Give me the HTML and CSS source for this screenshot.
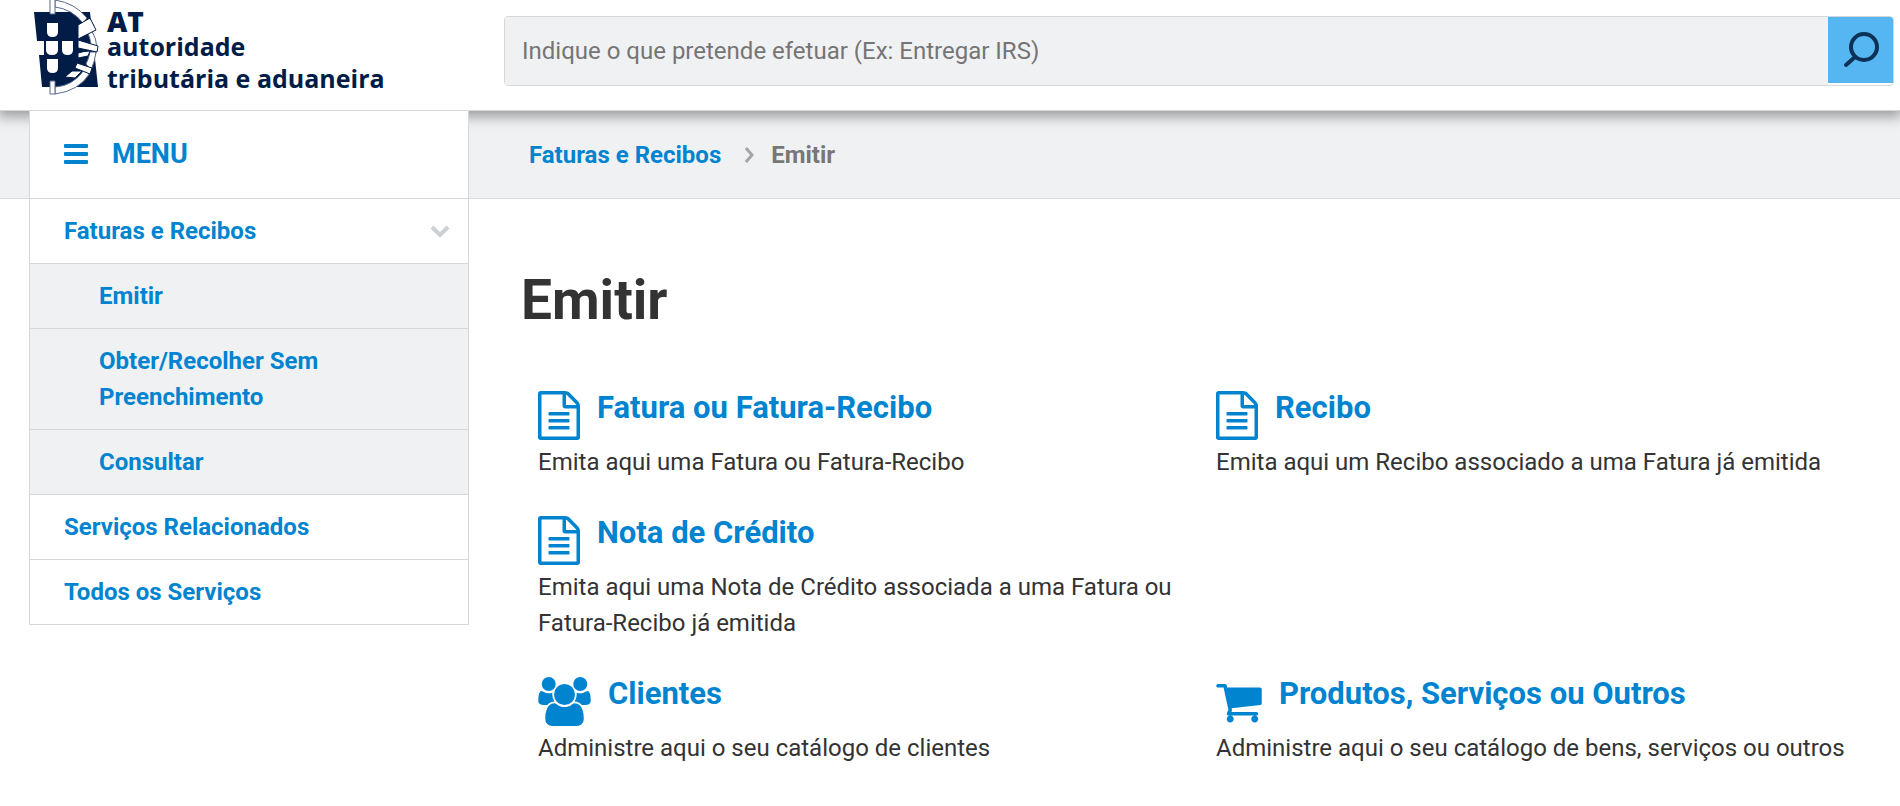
FILE: index.html
```html
<!DOCTYPE html>
<html lang="pt">
<head>
<meta charset="UTF-8">
<meta name="viewport" content="width=device-width, initial-scale=1.0">
<title>Emitir - Faturas e Recibos</title>
<link rel="stylesheet" href="styles.css">
</head>
<body>

<!-- Icons used more than once -->
<svg class="sprite" aria-hidden="true">
  <symbol id="icon-file" viewBox="0 0 1536 1792">
    <path d="M1468 380q28 28 48 76t20 88v1152q0 40-28 68t-68 28h-1344q-40 0-68-28t-28-68v-1600q0-40 28-68t68-28h896q40 0 88 20t76 48zm-444-244v376h376q-10-29-22-41l-313-313q-12-12-41-22zm384 1528v-1024h-416q-40 0-68-28t-28-68v-416h-768v1536h1280zm-1024-864q0-14 9-23t23-9h704q14 0 23 9t9 23v64q0 14-9 23t-23 9h-704q-14 0-23-9t-9-23v-64zm736 224q14 0 23 9t9 23v64q0 14-9 23t-23 9h-704q-14 0-23-9t-9-23v-64q0-14 9-23t23-9h704zm0 256q14 0 23 9t9 23v64q0 14-9 23t-23 9h-704q-14 0-23-9t-9-23v-64q0-14 9-23t23-9h704z"/>
  </symbol>
</svg>

<header class="header">
  <a class="logo" href="#">
    <svg class="logo-shield" viewBox="0 0 66 95" aria-hidden="true">
      <path fill="#001c47" d="M1 12H57L65 87H9L6 55H11V41H4Z"/>
      <g fill="#fff">
        <path d="M14 23h11v9q0 5-5.500 5t-5.500-5zM13 41h12v9q0 5-6 5t-6-5zM29 41h11v9q0 5-5.500 5t-5.500-5zM14 59h11v9q0 5-5.500 5t-5.500-5z"/>
      </g>
      <g fill="#fff" stroke="#5b6b8b">
        <path d="M22 0Q42 3 54 18L50 23Q39 9 22 7Z"/>
        <path d="M58 29Q64 39 64 49L58 49Q58 38 54 32Z"/>
        <path d="M63 52Q62 61 58 70L53 64Q56 58 57 52Z"/>
        <path d="M22 94Q46 91 57 73L51 70Q40 86 22 87Z"/>
        <path d="M17 -1h5v15h-5zM17 81h5v13h-5z"/>
      </g>
      <path fill="#fff" stroke="#001c47" d="M45 25L57 18L63 30L45 39ZM45 40L65 46L64 52L45 48ZM45 53Q51 51 57 51L55 56L45 58ZM44 63L59 68L57 74L42 68ZM39 71L49 71L42 78L32 77Z"/>
    </svg>
    <span class="logo-text">
      <span class="logo-at">AT</span>
      <span class="logo-name">autoridade<br>tributária e aduaneira</span>
    </span>
  </a>
  <form class="search">
    <input type="search" class="search-input" aria-label="Pesquisar" placeholder="Indique o que pretende efetuar (Ex: Entregar IRS)">
    <button type="submit" class="search-button" aria-label="Pesquisar">
      <svg width="36" height="36" viewBox="0 0 36 36" fill="none" stroke="#0c3257" stroke-width="4" stroke-linecap="round" aria-hidden="true">
        <circle cx="21" cy="15" r="13"/>
        <path d="M12 25L3 33"/>
      </svg>
    </button>
  </form>
</header>

<div class="layout">
  <nav class="breadcrumb" aria-label="Localização">
    <a href="#">Faturas e Recibos</a>
    <svg width="9" height="16" viewBox="0 0 9 16" fill="none" stroke="#a5a5a5" stroke-width="3" aria-hidden="true">
      <path d="M1 1L7 8L1 15"/>
    </svg>
    <span>Emitir</span>
  </nav>

  <nav class="sidebar" aria-label="Menu">
    <button type="button" class="menu-toggle">
      <svg width="24" height="20" viewBox="0 0 24 20" fill="#0084d0" aria-hidden="true">
        <rect width="24" height="4" rx="1"/>
        <rect y="8" width="24" height="4" rx="1"/>
        <rect y="16" width="24" height="4" rx="1"/>
      </svg>
      MENU
    </button>
    <ul class="menu">
      <li>
        <a href="#">Faturas e Recibos
          <svg width="20" height="13" viewBox="0 0 20 13" fill="none" stroke="#ccd0d3" stroke-width="4" aria-hidden="true">
            <path d="M2 2L10 10L18 2"/>
          </svg>
        </a>
        <ul class="submenu">
          <li><a href="#">Emitir</a></li>
          <li><a href="#">Obter/Recolher Sem Preenchimento</a></li>
          <li><a href="#">Consultar</a></li>
        </ul>
      </li>
      <li><a href="#">Serviços Relacionados</a></li>
      <li><a href="#">Todos os Serviços</a></li>
    </ul>
  </nav>

  <main class="content">
    <h1>Emitir</h1>
    <div class="services">
      <section class="service">
        <h2><a href="#"><svg class="icon icon-file"><use href="#icon-file"/></svg>Fatura ou Fatura-Recibo</a></h2>
        <p>Emita aqui uma Fatura ou Fatura-Recibo</p>
      </section>
      <section class="service">
        <h2><a href="#"><svg class="icon icon-file"><use href="#icon-file"/></svg>Recibo</a></h2>
        <p>Emita aqui um Recibo associado a uma Fatura já emitida</p>
      </section>
      <section class="service service-first">
        <h2><a href="#"><svg class="icon icon-file"><use href="#icon-file"/></svg>Nota de Crédito</a></h2>
        <p>Emita aqui uma Nota de Crédito associada a uma Fatura ou Fatura-Recibo já emitida</p>
      </section>
      <section class="service service-first">
        <h2><a href="#"><svg class="icon icon-users" viewBox="0 0 1920 1792"><path d="M593 896q-162 5-265 128h-134q-82 0-138-40.500t-56-118.500q0-353 124-353 6 0 43.500 21t97.500 42.500 119 21.500q67 0 133-23-5 37-5 66 0 139 81 256zm1071 637q0 120-73 189.500t-194 69.500h-874q-121 0-194-69.500t-73-189.500q0-53 3.500-103.500t14-109 26.500-108.500 43-97.500 62-81 85.500-53.500 111.500-20q10 0 43 21.500t73 48 107 48 135 21.500 135-21.500 107-48 73-48 43-21.500q61 0 111.500 20t85.500 53.500 62 81 43 97.500 26.500 108.500 14 109 3.500 103.500zm-1024-1277q0 106-75 181t-181 75-181-75-75-181 75-181 181-75 181 75 75 181zm704 384q0 159-112.500 271.500t-271.500 112.500-271.500-112.500-112.500-271.500 112.500-271.500 271.500-112.500 271.500 112.500 112.500 271.500zm576 225q0 78-56 118.500t-138 40.500h-134q-103-123-265-128 81-117 81-256 0-29-5-66 66 23 133 23 59 0 119-21.500t97.500-42.500 43.500-21q124 0 124 353zm-128-609q0 106-75 181t-181 75-181-75-75-181 75-181 181-75 181 75 75 181z"/></svg>Clientes</a></h2>
        <p>Administre aqui o seu catálogo de clientes</p>
      </section>
      <section class="service">
        <h2><a href="#"><svg class="icon icon-cart" viewBox="0 0 1664 1792"><path d="M640 1536q0 52-38 90t-90 38-90-38-38-90 38-90 90-38 90 38 38 90zm896 0q0 52-38 90t-90 38-90-38-38-90 38-90 90-38 90 38 38 90zm128-1088v512q0 24-16.500 42.500t-40.500 21.500l-1044 122q13 60 13 70 0 16-24 64h920q26 0 45 19t19 45-19 45-45 19h-1024q-26 0-45-19t-19-45q0-11 8-31.500t16-36 21.500-40 15.500-29.500l-177-823h-204q-26 0-45-19t-19-45 19-45 45-19h256q16 0 28.500 6.500t19.500 15.500 13 24.500 8 26 5.500 29.500 4.500 26h1201q26 0 45 19t19 45z"/></svg>Produtos, Serviços ou Outros</a></h2>
        <p>Administre aqui o seu catálogo de bens, serviços ou outros</p>
      </section>
    </div>
  </main>
</div>

</body>
</html>
```
FILE: styles.css
```css
* {
  box-sizing: border-box;
}

body {
  margin: 0;
  font-family: Roboto, 'Liberation Sans', sans-serif;
  font-size: 24px;
  line-height: 36px;
  color: #333333;
  background-color: #ffffff;
}

a {
  color: #0084d0;
  text-decoration: none;
}

ul {
  list-style: none;
  margin: 0;
  padding: 0;
}

.sprite {
  display: none;
}

/* Header */
.header {
  position: relative;
  z-index: 1;
  display: flex;
  align-items: flex-start;
  height: 111px;
  padding: 0 6px 0 33px;
  background-color: #ffffff;
  border-bottom: 1px solid #d5d8da;
  box-shadow: 0 4px 12px 2px rgba(0, 0, 0, 0.35);
}

.logo {
  display: flex;
  flex: 0 0 471px;
  gap: 8px;
  color: #001c47;
}

.logo-shield {
  width: 66px;
  height: 95px;
}

.logo-text {
  display: flex;
  flex-direction: column;
  padding-top: 8px;
  font-family: 'Open Sans', sans-serif;
  font-weight: 800;
}

.logo-at {
  font-size: 28px;
  line-height: 26px;
  height: 22px;
}

.logo-name {
  font-size: 25px;
  font-weight: 700;
  line-height: 32px;
}

.search {
  display: flex;
  flex: 1;
  height: 70px;
  margin-top: 16px;
  border: 1px solid #d5d8da;
  border-radius: 4px;
}

.search-input {
  flex: 1;
  min-width: 0;
  padding: 0 17px;
  border: 0;
  border-radius: 4px 0 0 4px;
  background-color: #f0f1f3;
  font: inherit;
}

.search-input::placeholder {
  color: #757575;
}

.search-button {
  display: flex;
  align-items: center;
  justify-content: center;
  width: 65px;
  height: 66px;
  padding: 0;
  border: 0;
  border-radius: 0 3px 0 0;
  background-color: #55b6f2;
  cursor: pointer;
}

/* Page layout: the breadcrumb band runs behind the sidebar */
.layout {
  display: grid;
  grid-template-columns: 469px 1fr;
  grid-template-rows: auto 1fr;
}

.breadcrumb {
  grid-column: 1 / -1;
  grid-row: 1;
  display: flex;
  align-items: center;
  gap: 17px;
  height: 88px;
  padding-left: 529px;
  background-color: #f0f1f3;
  border-bottom: 1px solid #d9dcde;
  color: #777777;
  font-weight: 700;
}

.breadcrumb a {
  padding-right: 7px;
}

.sidebar {
  position: relative;
  z-index: 2;
  grid-column: 1;
  grid-row: 1 / 3;
  align-self: start;
  margin-left: 29px;
  background-color: #ffffff;
  border: 1px solid #d5d8da;
  border-width: 0 1px;
  font-weight: 700;
}

.menu-toggle {
  display: flex;
  align-items: center;
  gap: 24px;
  width: 100%;
  height: 88px;
  padding: 0 34px 2px;
  border: 0;
  border-bottom: 1px solid #d5d8da;
  background: none;
  color: #0084d0;
  font: inherit;
  font-size: 27px;
  cursor: pointer;
}

.menu a {
  display: flex;
  align-items: center;
  justify-content: space-between;
  padding: 14px 18px 14px 34px;
  border-bottom: 1px solid #d5d8da;
}

.submenu a {
  padding-left: 69px;
  padding-right: 100px;
  background-color: #f0f1f3;
}

/* Content */
.content {
  grid-column: 2;
  grid-row: 2;
  padding: 67px 23px 32px 52px;
}

h1 {
  margin: 0 0 57px;
  font-size: 55px;
  font-weight: 700;
  line-height: 68px;
}

.services {
  display: grid;
  grid-template-columns: 1fr 1fr;
  row-gap: 36px;
}

.service {
  padding: 0 17px;
}

.service-first {
  grid-column: 1;
}

.service h2 {
  margin: 0;
  font-size: 31px;
  font-weight: 700;
  line-height: 34px;
}

.service h2 a {
  display: flex;
  gap: 17px;
  height: 53px;
}

.service p {
  margin: 0;
}

.icon {
  flex: none;
  height: 49px;
  fill: #0084d0;
}

.icon-file {
  width: 42px;
}

.icon-users {
  width: 53px;
}

.icon-cart {
  width: 46px;
}
```
